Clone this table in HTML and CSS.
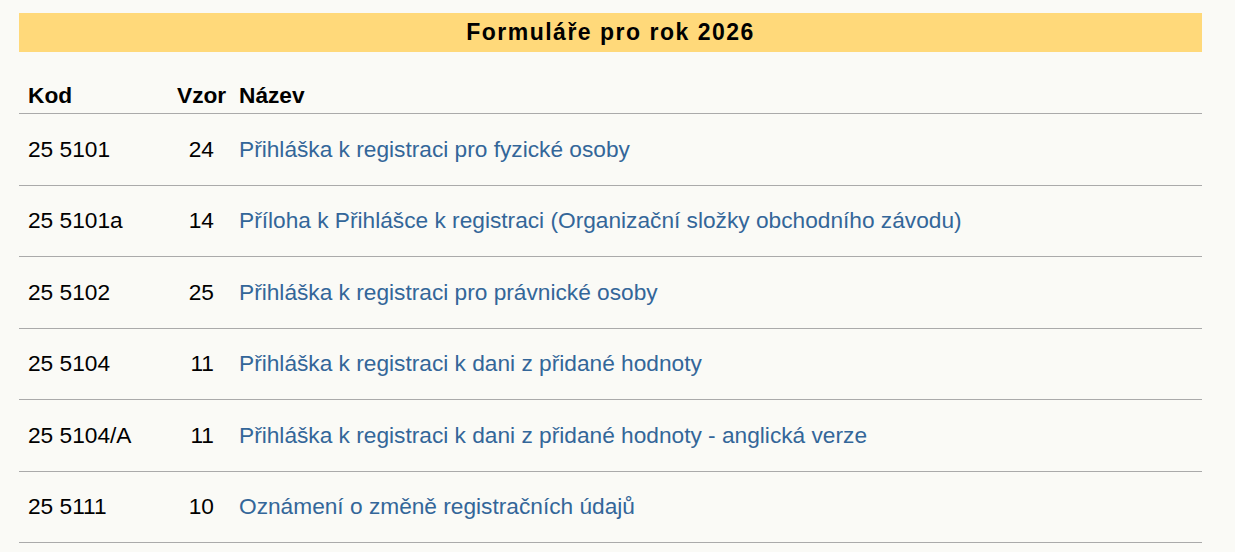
FILE: index.html
```html
<!DOCTYPE html>
<html lang="cs">
<head>
<meta charset="utf-8">
<title>Formuláře pro rok 2026</title>
<link rel="stylesheet" href="styles.css">
</head>
<body>
<div class="page">
  <h2 class="banner">Formuláře pro rok 2026</h2>
  <div class="table">
    <div class="row head">
      <div class="c-kod">Kod</div>
      <div class="c-vzor">Vzor</div>
      <div class="c-nazev">Název</div>
    </div>
    <div class="row">
      <div class="c-kod">25 5101</div>
      <div class="c-vzor num">24</div>
      <div class="c-nazev"><a href="#">Přihláška k registraci pro fyzické osoby</a></div>
    </div>
    <div class="row">
      <div class="c-kod">25 5101a</div>
      <div class="c-vzor num">14</div>
      <div class="c-nazev"><a href="#">Příloha k Přihlášce k registraci (Organizační složky obchodního závodu)</a></div>
    </div>
    <div class="row">
      <div class="c-kod">25 5102</div>
      <div class="c-vzor num">25</div>
      <div class="c-nazev"><a href="#">Přihláška k registraci pro právnické osoby</a></div>
    </div>
    <div class="row">
      <div class="c-kod">25 5104</div>
      <div class="c-vzor num">11</div>
      <div class="c-nazev"><a href="#">Přihláška k registraci k dani z přidané hodnoty</a></div>
    </div>
    <div class="row">
      <div class="c-kod">25 5104/A</div>
      <div class="c-vzor num">11</div>
      <div class="c-nazev"><a href="#">Přihláška k registraci k dani z přidané hodnoty - anglická verze</a></div>
    </div>
    <div class="row">
      <div class="c-kod">25 5111</div>
      <div class="c-vzor num">10</div>
      <div class="c-nazev"><a href="#">Oznámení o změně registračních údajů</a></div>
    </div>
  </div>
</div>
</body>
</html>
```
FILE: styles.css
```css
html, body {
  margin: 0;
  padding: 0;
  background: #fafaf6;
}
body {
  font-family: "Liberation Sans", Arial, sans-serif;
  color: #000;
}
.page {
  width: 1183px;
  padding: 13px 0 0 19px;
}
.banner {
  margin: 0;
  height: 39px;
  background: #ffd97a;
  display: flex;
  align-items: center;
  justify-content: center;
  font-size: 23px;
  font-weight: bold;
  letter-spacing: 1.5px;
}
.table {
  margin-top: 30px;
}
.row {
  display: grid;
  grid-template-columns: 149px 62px 1fr;
  padding-left: 9px;
  align-items: center;
  border-bottom: 1px solid #aaaaaa;
  min-height: 70.5px;
  font-size: 22.7px;
}
.row.head {
  min-height: 0;
  font-weight: bold;
  padding-bottom: 4px;
  align-items: end;
}
.num {
  text-align: right;
  padding-right: 25px;
}
.c-nazev a {
  color: #336699;
  text-decoration: none;
}
```
